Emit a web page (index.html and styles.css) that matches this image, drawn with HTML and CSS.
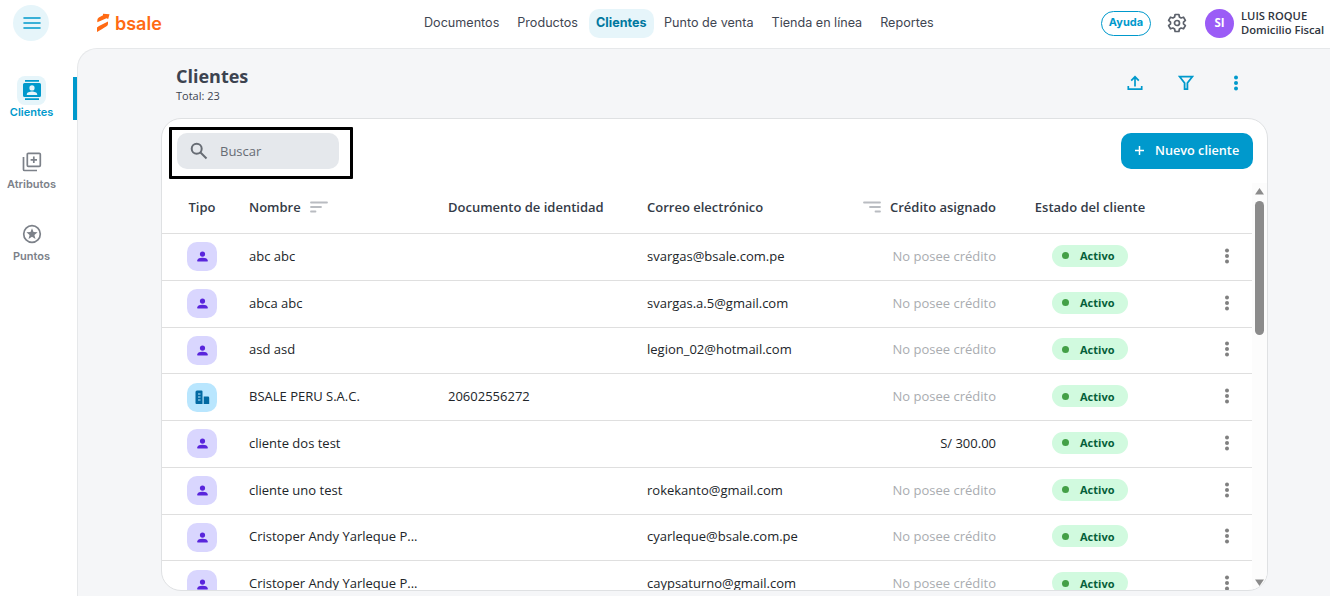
FILE: index.html
```
<!DOCTYPE html>
<html lang="es">
<head>
<meta charset="utf-8">
<title>Clientes</title>
<link rel="stylesheet" href="styles.css">
</head>
<body>
<svg class="defs" width="0" height="0">
  <symbol id="person" viewBox="0 0 24 24"><circle cx="12" cy="7.500" r="4.800"/><path d="M2.500 21v-2c0-3.500 4.500-4.800 9.500-4.800s9.500 1.300 9.500 4.800V21z"/></symbol>
  <symbol id="company" viewBox="0 0 15 15"><path fill-rule="evenodd" d="M2 .5h4.500a1 1 0 0 1 1 1V14H1.500A1 1 0 0 1 .5 13V2A1.500 1.500 0 0 1 2 .5zM3 3.500v1h2.500v-1zM3 6.500v1h2.500v-1zM3 9.500v1h2.500v-1zM8.700 6.500h4.300a1.200 1.200 0 0 1 1.200 1.200V14H8.700z"/></symbol>
  <symbol id="dots" viewBox="0 0 6 16"><circle cx="3" cy="2.500" r="2"/><circle cx="3" cy="8" r="2"/><circle cx="3" cy="13.500" r="2"/></symbol>
</svg>
<div class="app">
  <aside class="sidebar">
    <button class="menu-btn"><svg width="18" height="12" viewBox="0 0 18 12"><path d="M1 1h16M1 6h16M1 11h16" fill="none" stroke="#0099cc" stroke-width="1.600" stroke-linecap="round"/></svg></button>
    <nav class="side-nav">
      <a class="side-item active"><span class="side-icon"><svg width="20" height="22" viewBox="0 0 20 22"><path fill="#0099cc" fill-rule="evenodd" d="M3 1h14v1.700H3zM2.500 4h15A1.500 1.500 0 0 1 19 5.500v11a1.500 1.500 0 0 1-1.500 1.500h-15A1.500 1.500 0 0 1 1 16.500v-11A1.500 1.500 0 0 1 2.500 4zM3 19.300h14V21H3zM10 6.300a2.600 2.600 0 1 0 0 5.200 2.600 2.600 0 0 0 0-5.200zM4.800 16h10.400v-.8c0-1.800-3-2.800-5.200-2.800s-5.200 1-5.200 2.800z"/></svg></span>Clientes</a>
      <a class="side-item"><span class="side-icon"><svg width="20" height="20" viewBox="0 0 20 20" fill="none" stroke="#7c8189" stroke-width="1.700"><rect x="5.300" y="1.300" width="13" height="13" rx="1"/><path d="M1.500 5v12.500a1 1 0 0 0 1 1H15M11.800 4.600v6.400M8.600 7.800h6.400"/></svg></span>Atributos</a>
      <a class="side-item"><span class="side-icon"><svg width="20" height="20" viewBox="0 0 20 20"><circle cx="10" cy="10" r="8.300" fill="none" stroke="#7c8189" stroke-width="1.700"/><path fill="#7c8189" d="M10 4.200l1.500 3.900 4.100.2-3.200 2.600 1.100 4.100-3.500-2.300-3.500 2.300 1.100-4.100-3.200-2.600 4.100-.2z"/></svg></span>Puntos</a>
    </nav>
  </aside>
  <div class="body">
    <header class="topbar">
      <div class="logo"><svg width="13" height="20" viewBox="0 0 13 20" fill="#ff6a13"><path d="M.3 9.300V7.200q0-1.600 1.500-2.600L6 2.200 6 .8 12.500 1.200 11.200 6 9.500 5.300z"/><path d="M0 19V14.600L2 12.900 11 8.500V10.700q0 1.600-1.500 2.500L4.300 16.400z"/></svg><span>bsale</span></div>
      <nav class="main-nav"><a>Documentos</a><a>Productos</a><a class="active">Clientes</a><a>Punto de venta</a><a>Tienda en línea</a><a>Reportes</a></nav>
      <div class="account">
        <button class="help">Ayuda</button>
        <svg class="gear" width="20" height="20" viewBox="0 0 20 20" fill="none" stroke="#5c616b" stroke-width="1.700" stroke-linejoin="round"><path d="M8.100 1.500h3.800l.5 2.500 1.700 1 2.400-.8 1.900 3.200-1.900 1.700v1.800l1.900 1.700-1.900 3.200-2.400-.8-1.700 1-.5 2.500H8.100L7.600 16l-1.700-1-2.400.8-1.900-3.200 1.900-1.700V9.100L1.600 7.400l1.900-3.200 2.400.8 1.700-1z"/><circle cx="10" cy="10" r="2.500"/></svg>
        <span class="avatar">SI</span>
        <div class="who"><span>LUIS ROQUE</span><span>Domicilio Fiscal</span></div>
      </div>
    </header>
    <main class="main">
      <div class="heading">
        <div><h1>Clientes</h1><p>Total: 23</p></div>
        <div class="tools">
          <svg width="16" height="16" viewBox="0 0 16 16" fill="none" stroke="#0099cc" stroke-width="1.700"><path d="M8 11.500V2M4.200 5.600L8 1.800l3.800 3.800M1.300 11v3.200h13.400V11"/></svg>
          <svg width="16" height="16" viewBox="0 0 16 16"><path d="M1.700 1.700h12.600L9.400 8v6.200H6.600V8z" fill="none" stroke="#0099cc" stroke-width="1.800"/></svg>
          <svg width="6" height="16" fill="#0099cc"><use href="#dots"/></svg>
        </div>
      </div>
      <section class="card">
        <div class="actions">
          <div class="search-frame"><div class="search"><svg width="18" height="18" viewBox="0 0 18 18" fill="none" stroke="#676c74" stroke-width="2"><circle cx="6.700" cy="6.700" r="5"/><path d="M10.500 10.500L16.500 16.500"/></svg><span>Buscar</span></div></div>
          <button class="new-btn"><svg width="9" height="9" viewBox="0 0 9 9"><path d="M4.500 0v9M0 4.500h9" stroke="#fff" stroke-width="1.500"/></svg>Nuevo cliente</button>
        </div>
        <div class="table-wrap">
          <div class="table">
            <div class="row head"><span class="type">Tipo</span><span class="sortable">Nombre<svg width="18" height="12" viewBox="0 0 18 12"><path d="M1 1.500h16M1 6h10M1 10.500h4.500" stroke="#b9bcc1" stroke-width="1.800" stroke-linecap="round"/></svg></span><span>Documento de identidad</span><span>Correo electrónico</span><span class="sortable credit"><svg width="18" height="12" viewBox="0 0 18 12"><path d="M1 1.500h16M7 6h10M12.500 10.500H17" stroke="#b9bcc1" stroke-width="1.800" stroke-linecap="round"/></svg>Crédito asignado</span><span class="state">Estado del cliente</span><span></span></div>
            <div class="row"><span class="type"><i class="badge"><svg><use href="#person"/></svg></i></span><span>abc abc</span><span></span><span>svargas@bsale.com.pe</span><span class="credit none">No posee crédito</span><span class="state"><b class="pill">Activo</b></span><span class="more"><svg><use href="#dots"/></svg></span></div>
            <div class="row"><span class="type"><i class="badge"><svg><use href="#person"/></svg></i></span><span>abca abc</span><span></span><span>svargas.a.5@gmail.com</span><span class="credit none">No posee crédito</span><span class="state"><b class="pill">Activo</b></span><span class="more"><svg><use href="#dots"/></svg></span></div>
            <div class="row"><span class="type"><i class="badge"><svg><use href="#person"/></svg></i></span><span>asd asd</span><span></span><span>legion_02@hotmail.com</span><span class="credit none">No posee crédito</span><span class="state"><b class="pill">Activo</b></span><span class="more"><svg><use href="#dots"/></svg></span></div>
            <div class="row"><span class="type"><i class="badge company"><svg><use href="#company"/></svg></i></span><span>BSALE PERU S.A.C.</span><span>20602556272</span><span></span><span class="credit none">No posee crédito</span><span class="state"><b class="pill">Activo</b></span><span class="more"><svg><use href="#dots"/></svg></span></div>
            <div class="row"><span class="type"><i class="badge"><svg><use href="#person"/></svg></i></span><span>cliente dos test</span><span></span><span></span><span class="credit">S/ 300.00</span><span class="state"><b class="pill">Activo</b></span><span class="more"><svg><use href="#dots"/></svg></span></div>
            <div class="row"><span class="type"><i class="badge"><svg><use href="#person"/></svg></i></span><span>cliente uno test</span><span></span><span>rokekanto@gmail.com</span><span class="credit none">No posee crédito</span><span class="state"><b class="pill">Activo</b></span><span class="more"><svg><use href="#dots"/></svg></span></div>
            <div class="row"><span class="type"><i class="badge"><svg><use href="#person"/></svg></i></span><span>Cristoper Andy Yarleque P...</span><span></span><span>cyarleque@bsale.com.pe</span><span class="credit none">No posee crédito</span><span class="state"><b class="pill">Activo</b></span><span class="more"><svg><use href="#dots"/></svg></span></div>
            <div class="row"><span class="type"><i class="badge"><svg><use href="#person"/></svg></i></span><span>Cristoper Andy Yarleque P...</span><span></span><span>caypsaturno@gmail.com</span><span class="credit none">No posee crédito</span><span class="state"><b class="pill">Activo</b></span><span class="more"><svg><use href="#dots"/></svg></span></div>
          </div>
          <div class="scrollbar"><svg width="9" height="7" viewBox="0 0 9 7"><path d="M4.500 0L9 6.500H0z" fill="#8b8b8b"/></svg><div class="thumb"></div><svg class="down" width="9" height="7" viewBox="0 0 9 7"><path d="M4.500 7L0 .5h9z" fill="#8b8b8b"/></svg></div>
        </div>
      </section>
    </main>
  </div>
</div>
</body>
</html>
```
FILE: styles.css
```
* { box-sizing: border-box; }
body { margin: 0; background: #fff; font-family: "Open Sans", sans-serif; color: #212529; overflow: hidden; }
button { border: 0; padding: 0; font-family: inherit; }
svg { display: block; flex: none; }
.defs { position: absolute; }
.app { display: flex; height: 596px; }

.sidebar { width: 77px; flex: none; padding-top: 5px; }
.menu-btn { display: flex; align-items: center; justify-content: center; width: 36px; height: 36px; margin-left: 13px; padding: 0 0 1px 1px; border-radius: 50%; background: #e6f5fa; }
.side-nav { display: flex; flex-direction: column; gap: 29px; padding-top: 36px; }
.side-item { display: flex; flex-direction: column; align-items: center; height: 43px; padding-right: 10px; border-right: 4px solid transparent; font: 600 11px/14px Inter, sans-serif; color: #7c8189; }
.side-item.active { color: #0099cc; border-right-color: #0099cc; border-radius: 3px 0 0 3px; }
.side-icon { display: flex; align-items: center; justify-content: center; width: 29px; height: 29px; margin: -1px 0 0; padding-bottom: 1px; border-radius: 8px; }
.active .side-icon { background: #e6f5fa; }

.body { flex: 1; display: flex; flex-direction: column; }
.topbar { display: flex; align-items: center; justify-content: space-between; height: 48px; padding: 0 5px 2px 20px; }
.logo { display: flex; align-items: center; gap: 5px; width: 318px; color: #ff6a13; font: 600 18px/20px Inter, sans-serif; }
.logo span { padding-top: 2px; }
.main-nav { display: flex; align-items: center; font: 400 12.600px/28px Inter, sans-serif; color: #3f4652; }
.main-nav a { padding: 0 9px 1px; white-space: nowrap; }
.main-nav .active { padding: 0 7px 1px; margin: 0 1.500px 0 2px; border-radius: 10px; background: #e6f5fa; color: #00789f; font-weight: 700; }
.account { display: flex; align-items: center; margin-left: auto; }
.help { width: 50px; height: 25px; border: 1px solid #0099cc; border-radius: 13px; background: #fff; color: #0099cc; font: 700 11px/21px Inter, sans-serif; padding-bottom: 1px; }
.gear { margin-left: 16px; }
.avatar { width: 29px; height: 29px; margin: 0 7px 0 18px; border-radius: 50%; background: #9b5cf6; color: #fff; text-align: center; font-size: 11.500px; font-weight: 700; line-height: 28px; }
.who { display: flex; flex-direction: column; width: 84px; font-size: 11.200px; font-weight: 600; line-height: 14px; color: #2f3540; white-space: nowrap; }

.main { flex: 1; padding: 16px 62px 0 83px; border-top: 1px solid #e6e8ea; border-left: 1px solid #e6e8ea; border-radius: 20px 0 0 0; background: #f5f6f8; }
.heading { display: flex; justify-content: space-between; height: 53px; padding-left: 15px; color: #3c4350; }
h1 { margin: 0; font-size: 18px; line-height: 22px; font-weight: 700; }
p { margin: 1px 0 0; font-size: 11px; line-height: 16px; }
.tools { display: flex; gap: 35px; padding: 10px 29px 0 0; }
.tools svg:last-child { margin-left: 4px; }

.card { display: flex; flex-direction: column; height: 473px; border: 1px solid #dfe1e3; border-radius: 20px; background: #fff; overflow: hidden; }
.actions { display: flex; justify-content: space-between; height: 64px; padding: 8px 14px 0 7px; }
.search-frame { width: 184px; height: 52px; padding: 3px 5px; border: 3px solid #000; border-radius: 1px; }
.search { display: flex; align-items: center; gap: 12px; width: 162px; height: 36px; padding: 0 0 1px 13px; border-radius: 10px; background: #e5e8ec; font-size: 13px; color: #676c74; }
.search span { padding-top: 1px; }
.new-btn { display: flex; align-items: center; gap: 11px; width: 132px; height: 36px; margin-top: 6px; padding: 0 0 2px 14px; border-radius: 10px; background: #0099cc; color: #fff; font-size: 12.700px; font-weight: 600; white-space: nowrap; }

.table-wrap { display: flex; flex: 1; min-height: 0; }
.table { flex: 1; overflow: hidden; font-size: 13px; }
.row { display: grid; grid-template-columns: 79px 199px 199px 199px 166px 172px 1fr; align-items: center; height: 46.750px; border-bottom: 1px solid #dfdfdf; }
.row > span { padding: 0 8px 2px; white-space: nowrap; }
.row.head { height: 51px; font-weight: 600; color: #343b47; }
.row > .type { display: flex; justify-content: center; padding: 0 7px 0 8px; }
.head > .type { padding-bottom: 2px; }
.sortable { display: flex; align-items: center; gap: 9px; }
.credit { text-align: right; justify-content: flex-end; }
.none { color: #a9acb0; }
.row > .state { display: flex; justify-content: center; }
.badge { display: flex; align-items: center; justify-content: center; width: 30px; height: 29px; border-radius: 10px; background: #d9d6fe; color: #5925dc; fill: currentColor; }
.badge svg { width: 13px; height: 13px; }
.badge.company { background: #b9e6fe; color: #026aa2; }
.badge.company svg { width: 15px; height: 15px; }
.pill { display: flex; align-items: center; gap: 11px; width: 76px; height: 22px; padding-left: 10px; border-radius: 11px; background: #d1fadf; color: #05603a; font-size: 11px; font-weight: 700; }
.pill::before { content: ""; width: 7px; height: 7px; border-radius: 50%; background: #43a047; }
.row > .more { padding-left: 48px; fill: #808080; }
.more svg { width: 6px; height: 16px; }
.scrollbar { display: flex; flex-direction: column; align-items: center; width: 15px; padding: 5px 1px 4px 0; background: #fcfcfc; }
.thumb { width: 9px; height: 134px; margin-top: 6px; border-radius: 5px; background: #8b8b8b; }
.down { margin-top: auto; }
```
